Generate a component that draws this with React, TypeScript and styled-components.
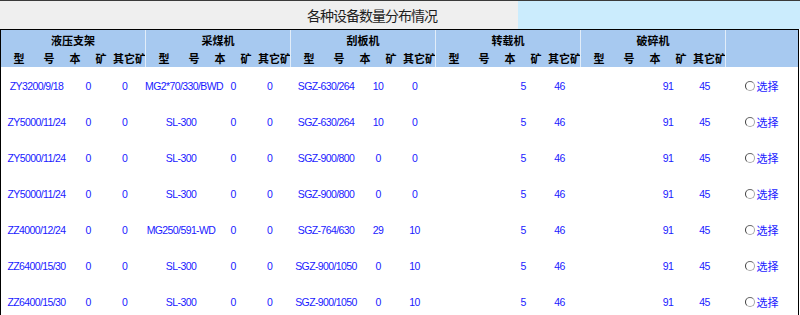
import React from "react";
import styled, { createGlobalStyle } from "styled-components";

const GlobalStyle = createGlobalStyle`
  html, body { margin: 0; padding: 0; background: #ffffff; }
  body { font-family: "Noto Sans CJK SC", "Noto Sans", sans-serif; }
`;

const Page = styled.div`
  width: 800px;
  border-top: 1px solid #3a3a3a;
  overflow: hidden;
`;

const TitleBar = styled.div`
  display: flex;
  height: 28px;
`;

const TitleCell = styled.div`
  width: 518px;
  box-sizing: border-box;
  padding-left: 226px;
  background: #efefef;
  color: #1e1e1e;
  font-size: 14px;
  letter-spacing: -1px;
  line-height: 28px;
  text-align: center;
`;

const TitleFill = styled.div`
  flex: 1;
  background: #cbecfd;
`;

const Table = styled.div`
  width: 799px;
  box-sizing: border-box;
  border: 1px solid #000;
  border-bottom: none;
`;

const Header = styled.div`
  display: flex;
  height: 37px;
  background: #a7c9f0;
`;

const HeaderGroup = styled.div<{ $w: number; $sep: boolean }>`
  width: ${(p) => p.$w}px;
  flex: ${(p) => (p.$w ? "none" : "1")};
  box-sizing: border-box;
  border-left: ${(p) => (p.$sep ? "1px solid #e2edf9" : "none")};
  display: flex;
  flex-direction: column;
`;

const GroupTitle = styled.div`
  height: 19px;
  line-height: 21px;
  text-align: center;
  font-size: 11px;
  font-weight: 700;
  color: #000;
`;

const SubRow = styled.div`
  height: 18px;
  display: grid;
  grid-template-columns: 36px 24px 28px 24px 33px;
  align-items: center;
  font-size: 11px;
  font-weight: 700;
  color: #000;
`;

const SubLabel = styled.span`
  text-align: center;
  white-space: nowrap;
`;

const Row = styled.div`
  display: flex;
  height: 36px;
  align-items: center;
  padding-top: 1px;
  box-sizing: border-box;
`;

const DataGroup = styled.div<{ $w: number }>`
  width: ${(p) => p.$w}px;
  flex: ${(p) => (p.$w ? "none" : "1")};
  display: grid;
  grid-template-columns: ${(p) => p.$w - 73}px 32px 41px;
  align-items: center;
`;

const Cell = styled.span`
  text-align: center;
  white-space: nowrap;
  font-family: "Liberation Sans", Arial, sans-serif;
  font-size: 10.5px;
  letter-spacing: -0.6px;
  color: #1a1aff;
`;

const SelectCell = styled.label`
  flex: 1;
  display: flex;
  align-items: center;
  justify-content: center;
  gap: 2px;
  color: #1a1aff;
  font-size: 11px;
`;

const Radio = styled.span`
  display: inline-block;
  width: 8px;
  height: 8px;
  border-radius: 50%;
  border: 1px solid #a8a8a8;
  border-left-color: #3c3c3c;
  border-top-color: #6a6a6a;
  background: #fff;
`;

const groups = ["液压支架", "采煤机", "刮板机", "转载机", "破碎机"];
const widths = [144, 145, 145, 145, 145];

type R = [string, string, string][];

const rows: R[] = [
  [["ZY3200/9/18", "0", "0"], ["MG2*70/330/BWD", "0", "0"], ["SGZ-630/264", "10", "0"], ["", "5", "46"], ["", "91", "45"]],
  [["ZY5000/11/24", "0", "0"], ["SL-300", "0", "0"], ["SGZ-630/264", "10", "0"], ["", "5", "46"], ["", "91", "45"]],
  [["ZY5000/11/24", "0", "0"], ["SL-300", "0", "0"], ["SGZ-900/800", "0", "0"], ["", "5", "46"], ["", "91", "45"]],
  [["ZY5000/11/24", "0", "0"], ["SL-300", "0", "0"], ["SGZ-900/800", "0", "0"], ["", "5", "46"], ["", "91", "45"]],
  [["ZZ4000/12/24", "0", "0"], ["MG250/591-WD", "0", "0"], ["SGZ-764/630", "29", "10"], ["", "5", "46"], ["", "91", "45"]],
  [["ZZ6400/15/30", "0", "0"], ["SL-300", "0", "0"], ["SGZ-900/1050", "0", "10"], ["", "5", "46"], ["", "91", "45"]],
  [["ZZ6400/15/30", "0", "0"], ["SL-300", "0", "0"], ["SGZ-900/1050", "0", "10"], ["", "5", "46"], ["", "91", "45"]],
];

export default function App() {
  return (
    <>
      <GlobalStyle />
      <Page>
        <TitleBar>
          <TitleCell>各种设备数量分布情况</TitleCell>
          <TitleFill />
        </TitleBar>
        <Table>
          <Header>
            {groups.map((g, i) => (
              <HeaderGroup key={g} $w={widths[i]} $sep={i > 0}>
                <GroupTitle>{g}</GroupTitle>
                <SubRow>
                  <SubLabel>型</SubLabel>
                  <SubLabel>号</SubLabel>
                  <SubLabel>本</SubLabel>
                  <SubLabel>矿</SubLabel>
                  <SubLabel>其它矿</SubLabel>
                </SubRow>
              </HeaderGroup>
            ))}
            <HeaderGroup $w={0} $sep={true} />
          </Header>
          {rows.map((r, ri) => (
            <Row key={ri}>
              {r.map((c, ci) => (
                <DataGroup key={ci} $w={widths[ci]}>
                  <Cell>{c[0]}</Cell>
                  <Cell>{c[1]}</Cell>
                  <Cell>{c[2]}</Cell>
                </DataGroup>
              ))}
              <SelectCell>
                <Radio />
                <span>选择</span>
              </SelectCell>
            </Row>
          ))}
        </Table>
      </Page>
    </>
  );
}
